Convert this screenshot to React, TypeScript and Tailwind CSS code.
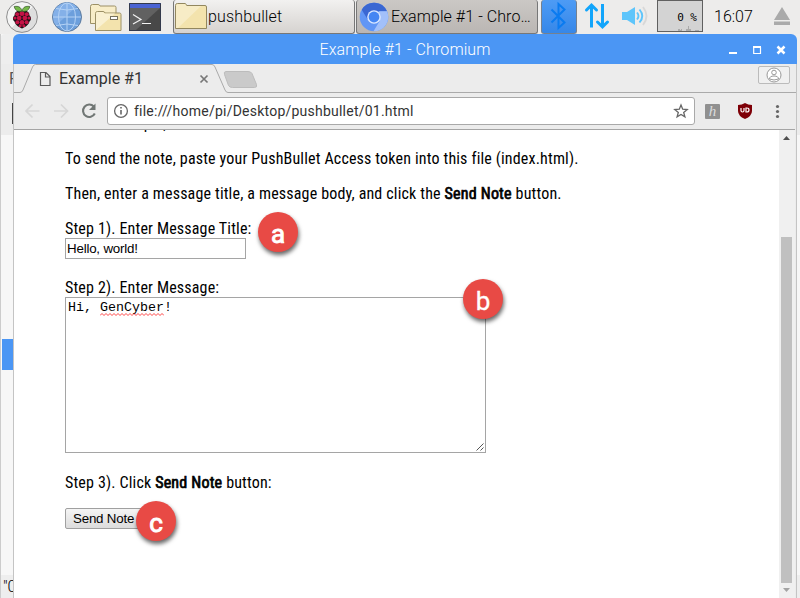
import React from "react";

function RaspberryIcon() {
  const drupelets: [number, number, number][] = [
    [16, 12.6, 2.5], [11.2, 13.2, 2], [20.8, 13.2, 2],
    [9, 17, 1.6], [13.2, 17.1, 2.4], [18.8, 17.1, 2.4], [23, 17, 1.6],
    [11.4, 21.2, 2], [16, 21.4, 2.3], [20.6, 21.2, 2],
    [14.2, 24.7, 1.5], [17.8, 24.7, 1.5],
  ];
  return (
    <svg width="32" height="32" viewBox="0 0 32 32">
      <defs>
        <linearGradient id="disc" x1="0" y1="0" x2="1" y2="1">
          <stop offset="0.5" stopColor="#f4f4f4" />
          <stop offset="0.5" stopColor="#dedede" />
        </linearGradient>
      </defs>
      <circle cx="16" cy="16" r="15.4" fill="url(#disc)" stroke="#8d8d8d" />
      <path d="M16 10c5-1 7.500 1 7.500 4.500 2.500 2 1.500 5 0 6-1 4-4.500 5.500-7.500 7-3-1.500-6.500-3-7.500-7-1.500-1-2.500-4 0-6C8.500 11 11 9 16 10z" fill="#1d1015" />
      {drupelets.map(([x, y, r], i) => (
        <circle key={i} cx={x} cy={y} r={r} fill="#c51246" />
      ))}
      <path d="M16 10.200C13.500 11 9 10.200 8.200 5.500c4-.6 6.600.2 7.800 4.500 1.200-4.300 3.800-5.100 7.800-4.500C23 10.200 18.500 11 16 10.200z" fill="#75b94a" stroke="#26401c" strokeWidth=".6" />
    </svg>
  );
}

function GlobeIcon() {
  return (
    <svg width="32" height="32" viewBox="0 0 32 32">
      <circle cx="16" cy="16" r="14.500" fill="#6c9fdc" stroke="#607c9e" />
      <path d="M2 16A14 14 0 0 1 25.500 5.500L5 24.500A14 14 0 0 1 2 16z" fill="#84b0e8" />
      <g fill="none" stroke="#b4d2f5" strokeWidth="1">
        <path d="M16 2v28M2 16h28M5 7.500q11 3 22 0M5 24.500q11-3 22 0" />
        <ellipse cx="16" cy="16" rx="8.500" ry="14" />
      </g>
    </svg>
  );
}

function FoldersIcon() {
  return (
    <svg width="34" height="32" viewBox="0 0 34 32">
      <g strokeLinejoin="round">
        <path d="M1.500 22.500V5.500q0-2 2-2H9q1.500 0 2 1.500h14.500q1.500 0 1.500 1.500v16z" fill="#f8edc8" stroke="#9c9066" />
        <path d="M6.500 29.500V12.500q0-2 2-2H14q1.500 0 2 1.500h14.500q1.500 0 1.500 1.500v16z" fill="#f3e3ad" stroke="#9c9066" />
        <path d="M7 29V12.500q0-1.500 1.500-1.500H14l1.500 1.500H26z" fill="#f9f0d1" />
      </g>
      <rect x="21.500" y="15.500" width="7" height="3" fill="#fff" stroke="#77725f" />
    </svg>
  );
}

function TerminalIcon() {
  return (
    <svg width="32" height="28" viewBox="0 0 32 28">
      <path d="M0 0h32v28H0z" fill="#484848" />
      <path d="M1 5h30L7 27H1z" fill="#616161" />
      <path d="M0 0h32v5H0z" fill="#4a63d3" />
      <path d="M.5.500h31v27H.5z" fill="none" stroke="#33394c" />
      <path d="M4 11.500l8 5-8 4.500M13 20.500h9" fill="none" stroke="#f3f3f3" strokeWidth="1.200" />
    </svg>
  );
}

function FolderIcon() {
  return (
    <svg width="34" height="30" viewBox="0 0 34 30" className="shrink-0">
      <path d="M1.500 26.500V3.500q0-2 2-2h7.500q1 0 1.600 2H31q1.500 0 1.500 1.500v21.500z" fill="#f3e3ad" stroke="#92875f" />
      <path d="M2 26V4q0-2 2-2h7l1.500 2H27L4 26z" fill="#f7ecc6" />
    </svg>
  );
}

function ChromiumIcon() {
  return (
    <svg width="30" height="30" viewBox="0 0 30 30" className="shrink-0">
      <circle cx="15" cy="15" r="14.300" fill="#6196f5" />
      <path d="M2.700 7.700A14.300 14.300 0 0 1 28 9.200H15l-6.400 8.100z" fill="#3a67d2" />
      <path d="M28 9.200A14.300 14.300 0 0 1 14.500 29.300L21 18.500 20 9.200z" fill="#a2c0fa" />
      <circle cx="15" cy="15" r="6.800" fill="#dce8ff" />
      <circle cx="15" cy="15" r="5.400" fill="#4586f3" />
    </svg>
  );
}

function Tray() {
  return (
    <>
      <div className="ml-[3px] h-[34px] w-[36px] shrink-0 rounded-[3px] border border-t-0 border-[#75818f] bg-linear-to-b from-[#4d9bf5] to-[#3687e8]">
        <svg width="34" height="32" viewBox="0 0 34 32">
          <path d="M9.500 9.500l13 13L16.500 28V4l6 5.500-13 13" fill="none" stroke="#0a7bf0" strokeWidth="2" />
        </svg>
      </div>
      <svg className="ml-[6px] shrink-0" width="28" height="34" viewBox="0 0 28 34" fill="none" stroke="#12a5fb" strokeWidth="3">
        <path d="M8.500 27.500V5.500M19.500 4v22" />
        <path d="M3.500 10l5-4.800 5 4.800M14.500 22l5 4.800 5-4.800" strokeLinecap="round" />
      </svg>
      <svg className="ml-[10px] shrink-0" width="28" height="34" viewBox="0 0 28 34">
        <path d="M1 12h5l8-5v18l-8-5H1z" fill="#5ec5fb" />
        <g fill="none" strokeWidth="1.900">
          <path d="M16 12.500q3 3.500 0 7M18.500 9.500q5.500 6.500 0 13" stroke="#5ec5fb" />
          <path d="M22 7q7 9 0 18" stroke="#d8d8d8" />
        </g>
      </svg>
      <div className="relative -mt-[2px] ml-[8px] h-[32px] w-[46px] shrink-0 border border-[#606060] bg-[#d3d3d3] text-right">
        <span className="block pt-[9px] pr-[5px] font-['DejaVu_Sans_Mono',monospace] text-[11px] leading-4 font-normal whitespace-pre text-black">0 %</span>
        <svg className="absolute bottom-0 left-[20px]" width="22" height="5" viewBox="0 0 22 5">
          <path d="M0 5V3h2v1h1V3h1v2h4V3h2V0h1v3h2v2h4V4h4v1z" fill="#aaa" />
        </svg>
      </div>
      <span className="ml-[11px] w-[40px] shrink-0 text-[16px] whitespace-nowrap text-black">16:07</span>
      <svg className="ml-[19px] shrink-0" width="18" height="34" viewBox="0 0 18 34">
        <path d="M9 7L17 20H1zM1 21.500h16v3.500H1z" fill="#aaa" />
      </svg>
    </>
  );
}

function Taskbar() {
  return (
    <div className="flex h-[34px] w-full items-center overflow-hidden bg-[#edeceb] font-[Roboto,sans-serif] font-light">
      <div className="flex w-[173px] shrink-0 items-center pl-[6px]">
        <RaspberryIcon />
        <div className="ml-[13px]"><GlobeIcon /></div>
        <div className="ml-[6px]"><FoldersIcon /></div>
        <div className="ml-[6px]"><TerminalIcon /></div>
      </div>
      <div className="flex h-[34px] w-[182px] shrink-0 items-center rounded-[3px] border border-t-0 border-[#777] bg-linear-to-b from-[#f2f1f0] to-[#d6d3d0]">
        <FolderIcon />
        <span className="text-[16px] tracking-[0.15px] text-black">pushbullet</span>
      </div>
      <div className="ml-px flex h-[34px] w-[182px] shrink-0 items-center rounded-[3px] border border-t-0 border-[#777] bg-linear-to-b from-[#cbc8c5] to-[#bab6b3] pl-[2px]">
        <ChromiumIcon />
        <span className="ml-[2px] text-[16px] tracking-[0.07px] whitespace-nowrap text-black">Example #1 - Chro…</span>
      </div>
      <Tray />
    </div>
  );
}

function TitleBar() {
  return (
    <div className="relative flex h-[30px] items-center justify-center rounded-t-[6px] bg-[#4b96f4] font-[Roboto,sans-serif] text-[16px] font-light text-white">
      <span className="pt-[2px] tracking-[0.1px]">Example #1 - Chromium</span>
      <svg className="absolute top-0 right-px" width="80" height="30" viewBox="0 0 80 30" fill="none" stroke="#fff">
        <path d="M13 19h8" strokeWidth="2" />
        <path d="M37.700 13v6.500h6.800V13" strokeWidth="1.200" />
        <path d="M37 13h8" strokeWidth="2" />
        <path d="M61.500 12.500l7 7M68.500 12.500l-7 7" strokeWidth="2.500" />
      </svg>
    </div>
  );
}

function TabStrip() {
  return (
    <div className="relative h-[28px] bg-[#ececec]">
      <svg className="absolute inset-0" width="782" height="29" viewBox="0 0 782 29" fill="none">
        <path d="M0 28.500h6q2 0 3-2.500L18.500 3q1-2.500 3-2.500H198q2 0 3 2.500l10 23q1 2.500 3 2.500h568" stroke="#aaa" />
        <path d="M212 7.500h22q3 0 4 2l4.500 11q1 3-2 3h-22q-3 0-4-2l-4-11q-1-3 1.500-3z" fill="#cacaca" stroke="#bcbcbc" />
        <path d="M26.500 8.500h5.500l4 4v9h-9.500zM31.500 8.500v4.500h4.500" stroke="#5a5a5a" strokeWidth="1.200" />
        <path d="M186.500 11.500l7 7M193.500 11.500l-7 7" stroke="#777" strokeWidth="1.700" />
        <rect x="744.500" y="2.500" width="31" height="17" rx="1.500" stroke="#bbb" fill="#f0f0f0" />
        <g stroke="#999">
          <circle cx="760" cy="11" r="7" fill="#fff" />
          <circle cx="760" cy="8.500" r="2.300" />
          <path d="M755.500 15q0-3 4.500-3t4.500 3q-4.500 2-9 0z" />
        </g>
      </svg>
      <span className="absolute top-[3px] left-[45px] font-[Roboto,sans-serif] text-[16px] leading-6 text-[#333]">Example #1</span>
    </div>
  );
}

function Toolbar() {
  return (
    <div className="flex h-[38px] items-center border-b border-[#a5a5a5] bg-[#ececec] pt-px">
      <svg width="93" height="28" viewBox="0 0 93 28" fill="none" strokeWidth="1.700">
        <path d="M25.500 14H12.500M18.500 7.500L12 14l6.500 6.500M40 14h13M47 7.500l6.500 6.500-6.500 6.500" stroke="#d6d6d6" />
        <path d="M79.800 9.500A6.200 6.200 0 1 0 80.800 16.500" stroke="#717775" strokeWidth="2.100" />
        <path d="M81.500 6.500v6.500H75z" fill="#717775" />
      </svg>
      <div className="flex h-[28px] w-[588px] items-center rounded-[3px] border border-[#a9a9a9] bg-white">
        <svg className="ml-[5px] shrink-0" width="16" height="16" viewBox="0 0 16 16" fill="none" stroke="#666">
          <circle cx="8" cy="8" r="6.400" strokeWidth="1.300" />
          <path d="M8 7v4.500M8 4v1.500" strokeWidth="1.600" />
        </svg>
        <span className="ml-[5px] flex-1 font-[Roboto,sans-serif] text-[14px] tracking-[0.23px] text-[#333]">file:///home/pi/Desktop/pushbullet/01.html</span>
        <svg className="mr-[5px]" width="16" height="16" viewBox="0 0 16 16">
          <path d="M8 2l1.700 4.200 4.500.3-3.500 2.900 1.200 4.400L8 11.400l-3.900 2.400 1.200-4.400-3.500-2.900 4.500-.3z" fill="none" stroke="#666" strokeWidth="1.300" />
        </svg>
      </div>
      <div className="ml-[10px] flex h-[15px] w-[15px] items-center justify-center rounded-[1px] bg-[#909090] font-['Liberation_Serif',serif] text-[15px] leading-none text-[#ddd] italic">h</div>
      <svg className="ml-[17px]" width="16" height="18" viewBox="0 0 16 18">
        <path d="M8 1q3 2 7 2v6q0 5-7 8-7-3-7-8V3q4 0 7-2z" fill="#7e0007" />
        <path d="M4 6v2.500q0 1.500 1.500 1.500T7 8.500V6M9 10h.8q2.200 0 2.200-2T9.800 6H9z" fill="none" stroke="#fff" strokeWidth="1.200" />
      </svg>
      <svg className="ml-[21px]" width="6" height="18" viewBox="0 0 6 18" fill="#666">
        <circle cx="3.500" cy="4.500" r="1.600" /><circle cx="3.500" cy="9.500" r="1.600" /><circle cx="3.500" cy="14.500" r="1.600" />
      </svg>
    </div>
  );
}

function Badge({ letter, className }: { letter: string; className: string }) {
  return (
    <div className={`absolute flex h-[40px] w-[40px] items-center justify-center rounded-full bg-[#e84a45] font-[Roboto,sans-serif] leading-none text-white shadow-[1px_3px_4px_rgba(0,0,0,0.6)] ${className}`}>
      {letter}
    </div>
  );
}

function Strong({ children }: { children: React.ReactNode }) {
  return <b className="font-normal tracking-[0.2px] [-webkit-text-stroke:0.7px_black]">{children}</b>;
}

function Scrollbar() {
  return (
    <div className="flex w-[16px] shrink-0 flex-col bg-[#f0f0f0]">
      <svg width="16" height="16" viewBox="0 0 16 16"><path d="M4 10l3.500-4L11 10z" fill="#505050" /></svg>
      <div className="mt-[91px] ml-[2px] h-[346px] w-[11px] bg-[#c0c0c0]" />
      <svg width="16" height="15" viewBox="0 0 16 15"><path d="M4 5l3.500 4L11 5z" fill="#a3a3a3" /></svg>
    </div>
  );
}

function Page() {
  return (
    <div className="relative flex h-[468px] overflow-hidden bg-white">
      <div className="-mt-[16px] min-w-0 flex-1 pl-[51px] font-[Roboto,sans-serif] text-[16px] leading-[19px] tracking-[0.165px] whitespace-nowrap text-black [font-stretch:75%]">
        <p>In this example,</p>
        <p className="mt-4">To send the note, paste your PushBullet Access token into this file (index.html).</p>
        <p className="mt-4">Then, enter a message title, a message body, and click the <Strong>Send Note</Strong> button.</p>
        <p className="mt-4">Step 1). Enter Message Title:</p>
        <div className="h-[21px] w-[181px] border border-[#a5a5a5] pl-px font-['Liberation_Sans',sans-serif] text-[13.333px] leading-[19px] tracking-[-0.2px] [font-stretch:100%]">Hello, world!</div>
        <p className="mt-[19px]">Step 2). Enter Message:</p>
        <div className="relative h-[156px] w-[421px] border border-[#a5a5a5] pt-[2px] pl-[2px] font-['Liberation_Mono',monospace] text-[13.333px] leading-[15px] tracking-normal text-black [font-stretch:100%]">
          Hi, GenCyber!
          <svg className="absolute top-[15px] left-[34px]" width="64" height="3" viewBox="0 0 64 3">
            <path d={"M0 2.500" + "l2-2l2 2".repeat(16)} fill="none" stroke="#f33" strokeWidth=".9" />
          </svg>
          <svg className="absolute right-px bottom-px" width="8" height="8" viewBox="0 0 8 8">
            <path d="M.5 7.500l7-7M4.500 7.500l3-3" stroke="#555" />
          </svg>
        </div>
        <p className="mt-5">Step 3). Click <Strong>Send Note</Strong> button:</p>
        <div className="mt-4 h-[21px] w-[78px] rounded-[2px] border border-[#a0a0a0] bg-linear-to-b from-[#f5f5f5] to-[#dcdcdc] pl-[7px] font-['Liberation_Sans',sans-serif] text-[13.333px] leading-[19px] tracking-[-0.2px] [font-stretch:100%]">Send Note</div>
      </div>
      <Scrollbar />
      <Badge letter="a" className="top-[82px] left-[244px] pt-[4px] text-[26px] [-webkit-text-stroke:0.9px_white]" />
      <Badge letter="b" className="top-[149px] left-[449px] pt-[4px] text-[26px] [-webkit-text-stroke:0.3px_white]" />
      <Badge letter="c" className="top-[371px] left-[122px] pt-[4px] text-[26px] [-webkit-text-stroke:1px_white]" />
    </div>
  );
}

function BackgroundWindow() {
  return (
    <div className="absolute top-[34px] left-0 h-[564px] w-[800px] overflow-hidden border-l border-[#ccc] bg-[#f7f7f7] font-[Roboto,sans-serif]">
      <div className="h-[30px] rounded-tl-[4px] bg-[#eee]" />
      <div className="h-[71px] bg-[#ececec] pt-[3px] pl-[8px] text-[16px] text-[#555]">
        File
        <div className="mt-[12px] ml-[3px] h-[21px] w-px bg-[#444]" />
      </div>
      <div className="mt-[204px] ml-px h-[31px] w-[12px] bg-[#4b96f4]" />
      <div className="mt-[205px] h-[23px] bg-[#eee] pl-[2px] text-[16px] leading-[23px] font-light">"01.html"</div>
    </div>
  );
}

export default function App() {
  return (
    <div className="relative h-[598px] w-[800px] overflow-hidden bg-[#edeceb]">
      <Taskbar />
      <BackgroundWindow />
      <div className="absolute top-[34px] left-[13px] h-[564px] w-[784px]">
        <TitleBar />
        <div className="border-r border-l border-[#c4c4c4] bg-[#ececec] pr-px">
          <TabStrip />
          <Toolbar />
          <Page />
        </div>
      </div>
    </div>
  );
}
